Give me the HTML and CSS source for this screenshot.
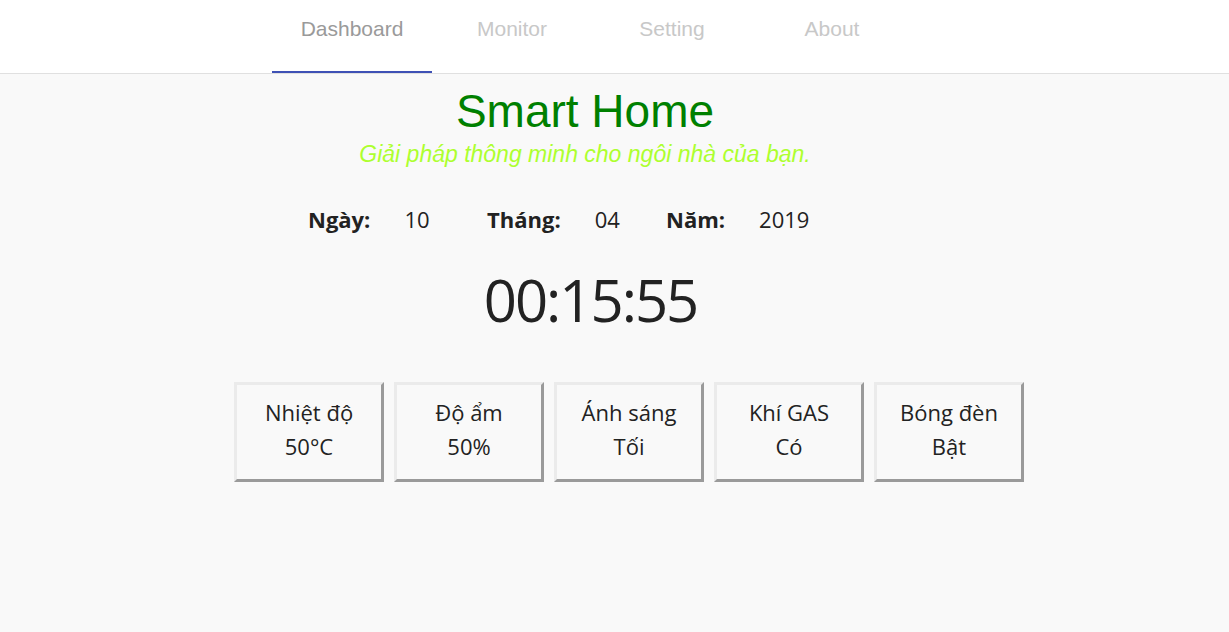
FILE: index.html
```html
<!DOCTYPE html>
<html lang="vi">
<head>
<meta charset="utf-8">
<title>Smart Home</title>
<link rel="stylesheet" href="styles.css">
</head>
<body>
<header class="topbar">
  <nav class="tabs">
    <a class="tab active" href="#">Dashboard</a>
    <a class="tab" href="#">Monitor</a>
    <a class="tab" href="#">Setting</a>
    <a class="tab" href="#">About</a>
  </nav>
</header>
<main class="main">
  <h1 class="title">Smart Home</h1>
  <p class="subtitle">Giải pháp thông minh cho ngôi nhà của bạn.</p>
  <div class="date-row">
    <div class="date-group"><span class="date-label">Ngày:</span><span class="date-value">10</span></div>
    <div class="date-group"><span class="date-label">Tháng:</span><span class="date-value">04</span></div>
    <div class="date-group"><span class="date-label">Năm:</span><span class="date-value">2019</span></div>
  </div>
  <div class="clock">00:15:55</div>
  <div class="cards">
    <div class="card"><div>Nhiệt độ</div><div>50°C</div></div>
    <div class="card"><div>Độ ẩm</div><div>50%</div></div>
    <div class="card"><div>Ánh sáng</div><div>Tối</div></div>
    <div class="card"><div>Khí GAS</div><div>Có</div></div>
    <div class="card"><div>Bóng đèn</div><div>Bật</div></div>
  </div>
</main>
</body>
</html>
```

FILE: styles.css
```css
html, body {
  margin: 0;
  padding: 0;
}
body {
  background: #f9f9f9;
  font-family: "Open Sans", "Noto Sans", sans-serif;
  color: #222;
  height: 632px;
  overflow: hidden;
}
.topbar {
  background: #fff;
  border-bottom: 1px solid #e0e0e0;
  height: 73px;
}
.tabs {
  display: flex;
  margin-left: 272px;
  height: 73px;
}
.tab {
  width: 160px;
  height: 73px;
  box-sizing: border-box;
  padding-top: 17px;
  text-align: center;
  font-family: "Liberation Sans", Arial, sans-serif;
  font-size: 21px;
  line-height: 24px;
  color: #c8c8c8;
  text-decoration: none;
}
.tab.active {
  color: #9a9a9a;
  border-bottom: 2px solid #3f51b5;
}
.main {
  width: 1170px;
  display: flex;
  flex-direction: column;
  align-items: center;
}
.title {
  margin: 14px 0 0;
  font-family: "Liberation Sans", Arial, sans-serif;
  font-weight: normal;
  font-size: 46px;
  line-height: 46px;
  color: #008000;
}
.subtitle {
  margin: 8px 0 0;
  font-family: "Liberation Sans", Arial, sans-serif;
  font-style: italic;
  font-size: 23px;
  line-height: 24px;
  color: #adff2f;
}
.date-row {
  align-self: flex-start;
  margin: 39px 0 0 308px;
  display: flex;
  font-size: 22px;
  line-height: 28px;
}
.date-group {
  width: 179px;
  display: flex;
}
.date-label {
  font-weight: bold;
  margin-right: 34px;
}
.clock {
  margin: 32px 0 0 11px;
  font-size: 58px;
  line-height: 70px;
  letter-spacing: -2px;
}
.cards {
  align-self: flex-start;
  margin: 47px 0 0 234px;
  display: flex;
  gap: 10px;
}
.card {
  width: 150px;
  height: 100px;
  box-sizing: border-box;
  padding-bottom: 6px;
  border-style: solid;
  border-width: 3px;
  border-color: #ebebeb #9a9a9a #9a9a9a #ebebeb;
  display: flex;
  flex-direction: column;
  align-items: center;
  justify-content: center;
  font-size: 22px;
  line-height: 34px;
}
```
